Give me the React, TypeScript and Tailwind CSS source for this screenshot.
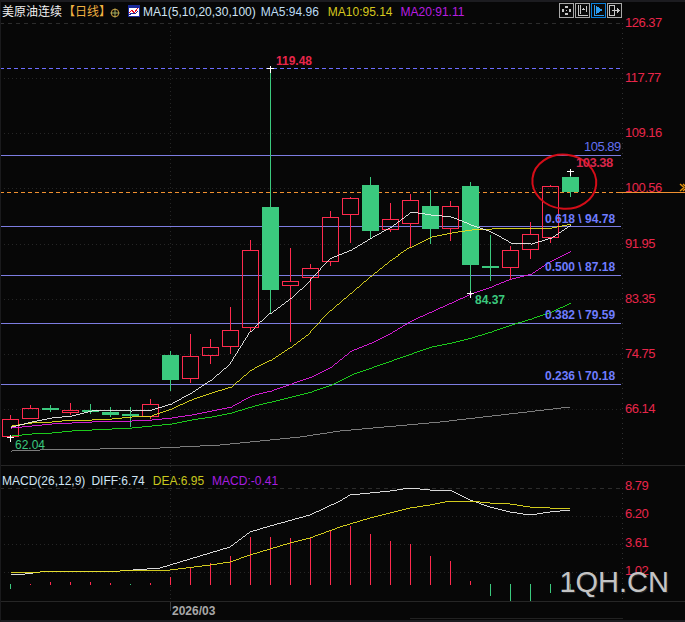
const RED = "#ff2a4e";
const GREEN = "#3bc97e";
const FIB = "#7c7ce0";

// [center x, wick top, wick bottom, body top, body bottom, up]
const candles: [number, number, number, number, number, boolean][] = [
  [10.5, 415, 437, 419, 436, true],
  [30.5, 405, 418, 408, 418, true],
  [50.5, 405, 412, 408, 410, false],
  [70.5, 403, 415, 410, 412, true],
  [90.5, 404, 414, 410, 412, false],
  [110.5, 407, 417, 412, 415, false],
  [130.5, 407, 427, 414, 416, false],
  [150.5, 399, 419, 404, 416, true],
  [170.5, 351, 391, 355, 380, false],
  [190.5, 334, 383, 356, 378, true],
  [210.5, 339, 364, 347, 355, true],
  [230.5, 307, 354, 330, 346, true],
  [250.5, 240, 332, 250, 327, true],
  [270.5, 68, 313, 207, 290, false],
  [290.5, 248, 342, 281, 285, true],
  [310.5, 264, 310, 268, 277, true],
  [330.5, 211, 266, 217, 261, true],
  [350.5, 197, 243, 198, 214, true],
  [370.5, 177, 239, 185, 231, false],
  [390.5, 203, 232, 219, 229, true],
  [410.5, 194, 247, 200, 223, true],
  [430.5, 190, 244, 206, 229, false],
  [450.5, 201, 241, 206, 228, true],
  [470.5, 182, 293, 186, 265, false],
  [490.5, 235, 281, 266, 268, false],
  [510.5, 246, 279, 250, 267, true],
  [530.5, 222, 259, 234, 249, true],
  [550.5, 185, 243, 186, 237, true],
  [570.5, 173, 197, 177, 192, false],
];

const ma5 = "10.5,427 30.5,422 50.5,418 70.5,416 90.5,411 110.5,410 130.5,411 150.5,410 170.5,404 190.5,393 210.5,380 230.5,363 250.5,331 270.5,313 290.5,298 310.5,280 330.5,258 350.5,250 370.5,238 390.5,227 410.5,212 430.5,215 450.5,217 470.5,225 490.5,232 510.5,243 530.5,244 550.5,238 570.5,225";
const ma10 = "10.5,426 30.5,423 50.5,422 70.5,420 90.5,420 110.5,419 130.5,417 150.5,416 170.5,409 190.5,400 210.5,393 230.5,387 250.5,370 270.5,360 290.5,347 310.5,332 330.5,310 350.5,293 370.5,276 390.5,260 410.5,247 430.5,237 450.5,233 470.5,230 490.5,229 510.5,228 530.5,228 550.5,228 570.5,224";
const ma20 = "10.5,428 30.5,426 50.5,424 70.5,423 90.5,422 110.5,421 130.5,421 150.5,420 170.5,418 190.5,415 210.5,411 230.5,407 250.5,396 270.5,391 290.5,384 310.5,377 330.5,367 350.5,351 370.5,343 390.5,333 410.5,321 430.5,312 450.5,303 470.5,294 490.5,287 510.5,279 530.5,274 550.5,261 570.5,251";
const ma30 = "10.5,436 30.5,434 50.5,433 70.5,431 90.5,430 110.5,429 130.5,428 150.5,426 170.5,424 190.5,420 210.5,417 230.5,413 250.5,407 270.5,402 290.5,397 310.5,392 330.5,385 350.5,375 370.5,368 390.5,361 410.5,354 430.5,347 450.5,343 470.5,338 490.5,332 510.5,325 530.5,319 550.5,312 570.5,303";
const ma100 = "10.5,451 40,450 100,449 160,448 220,445 260,441 300,437 340,431 440,422 570,407";

const diff = "10.5,574 25,574 40,572 120,571 160,568 190,559 230,547 250,532 270,526 310,515 340,501 350,495 390,491 410,488 430,490 450,490 470,500 490,507 510,512 530,515 550,512 570,510";
const dea = "10.5,572 40,572 120,571 170,570 210,565 230,562 250,555 290,543 310,538 340,527 370,518 390,513 410,508 430,505 450,501 470,501 490,503 510,504 530,507 550,508 570,509";

// [x, top, bottom, colour is green]
const bars: [number, number, number, boolean][] = [
  [10.5, 584, 589, true], [30.5, 584, 585, false], [50.5, 582, 585, false], [70.5, 582, 585, false],
  [90.5, 582, 585, false], [110.5, 583, 585, false], [130.5, 584, 585, true], [150.5, 583, 585, false],
  [170.5, 577, 585, false], [190.5, 568, 585, false], [210.5, 563, 585, false], [230.5, 556, 585, false],
  [250.5, 537, 585, false], [270.5, 537, 585, false], [290.5, 538, 585, false], [310.5, 538, 585, false],
  [330.5, 531, 585, false], [350.5, 526, 585, false], [370.5, 534, 585, false], [390.5, 541, 585, false],
  [410.5, 544, 585, false], [430.5, 556, 585, false], [450.5, 561, 585, false], [470.5, 581, 585, false],
  [490.5, 584, 596, true], [510.5, 584, 601, true], [530.5, 584, 601, true], [550.5, 584, 593, true],
  [570.5, 584, 591, true],
];

const axisMain: [string, number][] = [
  ["126.37", 27], ["117.77", 82], ["109.16", 137], ["100.56", 192],
  ["91.95", 248], ["83.35", 303], ["74.75", 358], ["66.14", 413],
];
const fibLines = [155.5, 226.5, 275.5, 323.5, 384.5];
const fibLabels: [string, number][] = [
  ["0.618 \\ 94.78", 223], ["0.500 \\ 87.18", 271], ["0.382 \\ 79.59", 319], ["0.236 \\ 70.18", 380],
];
const gridMain = [78.5, 133.5, 188.5, 244.5, 299.5, 354.5, 409.5];
const gridMacd = [516.5, 544.5, 572.5];
const axisMacd: [string, number][] = [["8.79", 490], ["6.20", 518], ["3.61", 547], ["1.02", 575]];

function Plus({ x, y }: { x: number; y: number }) {
  return (
    <path d={`M${x - 3} ${y}H${x + 4}M${x + 0.5} ${y - 3}V${y + 4}`} stroke="#ffffff" strokeWidth="1" />
  );
}

function ToolIcon({ active, children }: { active?: boolean; children: React.ReactNode }) {
  return (
    <svg width="15" height="15" viewBox="0 0 15 15" shapeRendering="crispEdges" className="block">
      <rect x="0.5" y="0.5" width="14" height="14" fill="#0a0a0a" stroke={active ? "#0c7fd8" : "#a8a8a8"} />
      {children}
    </svg>
  );
}

export default function App() {
  return (
    <div className="flex flex-col w-[685px] h-[622px] overflow-hidden bg-[#070707] font-['Liberation_Sans','Noto_Sans_CJK_SC',sans-serif] border-l border-[#1a1a1c]">
      <div className="h-[2px] shrink-0 bg-[#1c1c20] -ml-px" />

      {/* main header */}
      <div className="h-[19px] shrink-0 flex items-center text-[12px] leading-none whitespace-nowrap -ml-px">
        <span className="ml-[2px] text-[#f0f0f0]">美原油连续</span>
        <span className="ml-[1px] text-[#f0b040] text-[12px]">【日线】</span>
        <svg width="10" height="10" viewBox="0 0 10 10" className="-ml-px mt-[3px] block">
          <circle cx="5" cy="5" r="3.8" fill="none" stroke="#d9a441" strokeWidth="1" />
          <path d="M0.5 5H9.5M5 0.5V9.5" stroke="#a8b060" strokeWidth="1" />
        </svg>
        <svg width="12" height="12" viewBox="0 0 12 12" shapeRendering="crispEdges" className="ml-[8px] -mt-[2px] block">
          <rect x="0.5" y="0.5" width="11" height="11" fill="#ffffff" stroke="#1a2a9a" />
          <rect x="1" y="1" width="10" height="2" fill="#1a2a9a" />
          <path d="M1 8L4 5L6 8L10 3" fill="none" stroke="#e01020" strokeWidth="1" />
          <path d="M1 10L4 8L7 9L10 6" fill="none" stroke="#1a2a9a" strokeWidth="1" />
        </svg>
        <span className="ml-[3px] text-[#cfe4f4]">MA1(5,10,20,30,100)</span>
        <span className="ml-[5px] text-[#bcdcf4]">MA5:94.96</span>
        <span className="ml-[9px] text-[#d6c81e]">MA10:95.14</span>
        <span className="ml-[8px] text-[#b81ee0]">MA20:91.11</span>
        <div className="ml-auto mr-[63px] -mt-[2px] flex gap-[1px]">
          <ToolIcon>
            <path d="M6 3h3v2h-3zM6 10h3v2h-3zM3 6h2v3h-2zM10 6h2v3h-2z" fill="#c8c8c8" />
            <rect x="7" y="7" width="1" height="1" fill="#c8c8c8" />
          </ToolIcon>
          <ToolIcon>
            <path d="M3.5 2V12.5H13M5.5 2V10.5M11.5 3V9M10 6H7M8 5V7" fill="none" stroke="#c8c8c8" />
          </ToolIcon>
          <ToolIcon active>
            <path d="M3.5 2V12.5H13" fill="none" stroke="#2a9cf0" />
            <path d="M5 3L12 7L5 11Z" fill="#2a9cf0" />
          </ToolIcon>
          <ToolIcon>
            <path d="M2.5 2.5H7.5V12.5H2.5Z" fill="none" stroke="#c8c8c8" />
            <path d="M5 7H10V5L13 7.5L10 10V8H5Z" fill="#c8c8c8" />
          </ToolIcon>
        </div>
      </div>

      {/* price chart */}
      <svg viewBox="0 21 684 444" width="684" height="444" className="block shrink-0 -ml-px overflow-visible">
        <g shapeRendering="crispEdges" fill="none">
          <path d="M0 23.5H621" stroke="#2c2c2c" strokeDasharray="4 4" />
          {gridMain.map((y) => (
            <path key={y} d={`M0 ${y}H621`} stroke="#262626" strokeDasharray="1 3" />
          ))}
          <path d="M170.5 23V465" stroke="#262626" strokeDasharray="1 3" />
          <path d="M622.5 23V465" stroke="#303030" strokeDasharray="1 4" />
          <path d="M0 68.5H621" stroke="#6c6cff" strokeDasharray="4 3" />
          {fibLines.map((y) => (
            <path key={y} d={`M0 ${y}H621`} stroke={FIB} />
          ))}
          <path d="M0 192.5H619" stroke="#f09030" strokeDasharray="4 3" />
          <path d="M619 192.5H685" stroke="#f09030" />
        </g>

        <g shapeRendering="crispEdges">
          {candles.map(([x, wt, wb, bt, bb, up]) =>
            up ? (
              <g key={x} stroke={RED} fill="none">
                <path d={`M${x} ${wt}V${bt}M${x} ${bb}V${wb}`} />
                <rect x={x - 8} y={bt + 0.5} width="16" height={bb - bt} />
              </g>
            ) : (
              <g key={x}>
                <path d={`M${x} ${wt}V${wb}`} stroke={GREEN} fill="none" />
                <rect x={x - 8.5} y={bt} width="17" height={bb - bt} fill={GREEN} />
              </g>
            ),
          )}
        </g>

        <g fill="none" strokeWidth="0.9" shapeRendering="crispEdges">
          <polyline points={ma100} stroke="#8a8a8a" />
          <polyline points={ma30} stroke="#1fe01f" />
          <polyline points={ma20} stroke="#e81fe8" />
          <polyline points={ma10} stroke="#e8e020" />
          <polyline points={ma5} stroke="#f0f0f0" />
        </g>

        <g shapeRendering="crispEdges">
          <Plus x={270} y={68.5} />
          <Plus x={570} y={171.5} />
          <Plus x={470} y={293.5} />
          <Plus x={10} y={437.5} />
        </g>

        <ellipse cx="564.3" cy="181.7" rx="32" ry="27" fill="none" stroke="#d40d18" strokeWidth="2" transform="rotate(6 564.3 181.7)" />

        <g fontSize="12">
          <text x="276" y="65" fill="#e8264a" fontWeight="700">119.48</text>
          <text x="584" y="151" fill="#6470f0" fontSize="13" letterSpacing="-0.5">105.89</text>
          <text x="576" y="167" fill="#d8264a" fontWeight="700" fontSize="13" letterSpacing="-0.5">103.38</text>
          <text x="475" y="304" fill={GREEN} fontWeight="700">84.37</text>
          <text x="15" y="449" fill={GREEN}>62.04</text>
          {fibLabels.map(([t, y]) => (
            <text key={t} x="545" y={y} fill="#6f7dff" fontWeight="700">{t}</text>
          ))}
          {axisMain.map(([t, y]) => (
            <text key={t} x="625" y={y} fill="#e8264a" fontSize="13" letterSpacing="-0.5">{t}</text>
          ))}
        </g>
        <path d="M680 184L684 187.5L680 191M683 184L685 186M683 191L685 189" fill="none" stroke="#e8960c" strokeWidth="1.4" />
      </svg>

      {/* MACD panel */}
      <div className="relative h-[136px] shrink-0 border-t border-[#262626] -ml-px">
        <div className="absolute left-[2px] top-[9px] flex text-[12px] leading-none whitespace-nowrap">
          <span className="text-[#cfe4f4]">MACD(26,12,9)</span>
          <span className="ml-[6px] text-[#cfe4f4]">DIFF:6.74</span>
          <span className="ml-[8px] text-[#c9c81e]">DEA:6.95</span>
          <span className="ml-[8px] text-[#a81ee0]">MACD:-0.41</span>
        </div>
        <svg viewBox="0 466 684 135" width="684" height="135" className="block">
          <g shapeRendering="crispEdges" fill="none">
            <path d="M0 488.5H621" stroke="#2c2c2c" strokeDasharray="4 4" />
            {gridMacd.map((y) => (
              <path key={y} d={`M0 ${y}H621`} stroke="#262626" strokeDasharray="1 3" />
            ))}
            <path d="M170.5 466V601" stroke="#262626" strokeDasharray="1 3" />
            <path d="M622.5 488V601" stroke="#303030" strokeDasharray="1 4" />
            {bars.map(([x, t, b, g]) => (
              <path key={x} d={`M${x} ${t}V${b}`} stroke={g ? GREEN : RED} />
            ))}
            <polyline points={diff} stroke="#f0f0f0" strokeWidth="0.9" />
            <polyline points={dea} stroke="#e8e020" strokeWidth="0.9" />
          </g>
          <g fontSize="13" letterSpacing="-0.5">
            {axisMacd.map(([t, y]) => (
              <text key={t} x="625" y={y} fill="#e8264a">{t}</text>
            ))}
          </g>
        </svg>
        <span className="absolute right-[16px] top-[102px] text-[29px] leading-none text-[#c4c4c4] [text-shadow:1px_1px_1px_#2a2a2a]">
          1QH.CN
        </span>
      </div>

      {/* date axis */}
      <div className="relative h-[21px] shrink-0 border-t border-[#262626] -ml-px">
        <span className="absolute left-[172px] top-[2px] text-[12px] leading-[14px] font-bold text-[#a8a8a8]">2026/03</span>
        <div className="absolute left-[170px] top-0 h-[9px] w-px bg-[#3a3a3a]" />
        <div className="absolute left-[410px] top-[16px] h-px w-[213px] bg-[#222222]" />
        <div className="absolute left-0 right-0 bottom-0 h-[2px] bg-[#1c1c20]" />
      </div>
    </div>
  );
}
